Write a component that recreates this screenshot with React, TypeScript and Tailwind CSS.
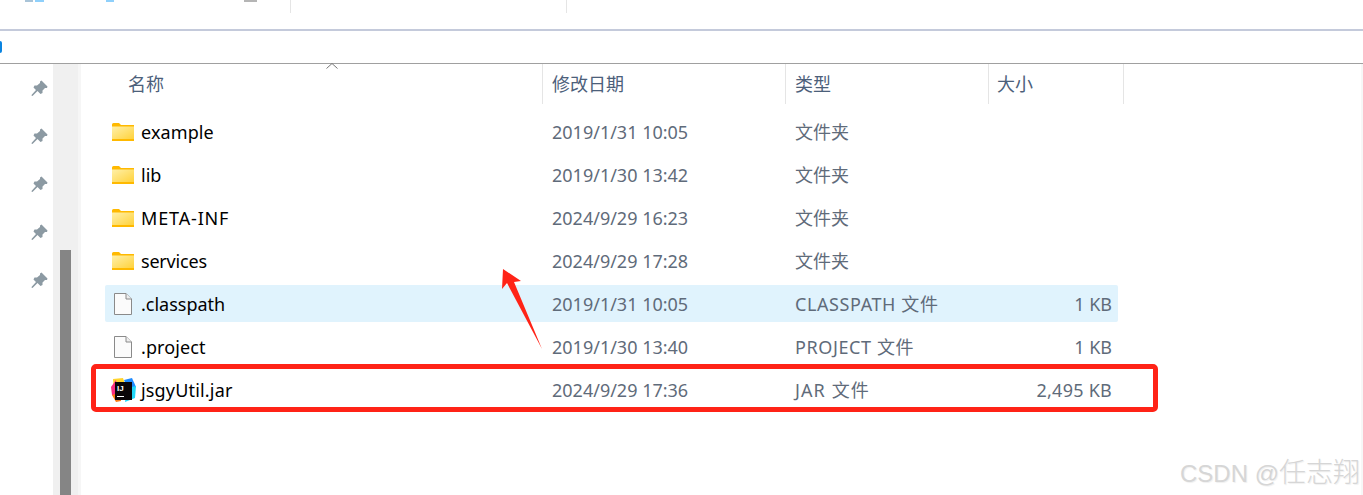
const FONT = "font-['Noto_Sans','Noto_Sans_CJK_SC',sans-serif]"

const ROWS = [
  { name: 'example', date: '2019/1/31 10:05', type: '文件夹', size: '', icon: 'folder', nameCls: 'tracking-[0.1px]', typeCls: '' },
  { name: 'lib', date: '2019/1/30 13:42', type: '文件夹', size: '', icon: 'folder', nameCls: '', typeCls: '' },
  { name: 'META-INF', date: '2024/9/29 16:23', type: '文件夹', size: '', icon: 'folder', nameCls: 'tracking-[0.85px]', typeCls: '' },
  { name: 'services', date: '2024/9/29 17:28', type: '文件夹', size: '', icon: 'folder', nameCls: 'tracking-[-0.2px]', typeCls: '' },
  { name: '.classpath', date: '2019/1/31 10:05', type: 'CLASSPATH 文件', size: '1 KB', icon: 'file', nameCls: '', typeCls: 'tracking-[0.6px]' },
  { name: '.project', date: '2019/1/30 13:40', type: 'PROJECT 文件', size: '1 KB', icon: 'file', nameCls: 'tracking-[0.1px]', typeCls: 'tracking-[0.6px]' },
  { name: 'jsgyUtil.jar', date: '2024/9/29 17:36', type: 'JAR 文件', size: '2,495 KB', icon: 'jar', nameCls: 'tracking-[0.17px]', typeCls: 'tracking-[1.1px]' },
]

function FolderIcon() {
  return (
    <svg width="22" height="18" viewBox="0 0 22 18">
      <path d="M0 1.5Q0 0 1.5 0H7L9 2H22V18H0Z" fill="#ffb900" />
      <rect x="0" y="3" width="22" height="15" fill="#ffb900" />
      <defs>
        <linearGradient id="folderFill" x1="0" y1="0" x2="1" y2="1">
          <stop offset="0" stopColor="#fff0a8" />
          <stop offset="1" stopColor="#ffd23c" />
        </linearGradient>
      </defs>
      <rect x="0" y="3.5" width="22" height="12.5" fill="url(#folderFill)" />
    </svg>
  )
}

function FileIcon() {
  return (
    <svg width="18" height="22" viewBox="0 0 18 22">
      <path d="M.5.5H12L17.5 6V21.5H.5Z" fill="#fbfbfb" stroke="#8a8a8a" />
      <path d="M12 .5V6H17.5" fill="#eeeeee" stroke="#8a8a8a" />
    </svg>
  )
}

function JarIcon() {
  return (
    <svg width="25" height="24" viewBox="0 0 25 24">
      <path d="M2 1L12 0L14 6L3 14Z" fill="#ffd42e" />
      <path d="M0 9L5 2L8 20L1 17Z" fill="#fa2f82" />
      <path d="M1 17L10 14L10 23L5 24Z" fill="#fb7a10" />
      <path d="M13 2L21 0L25 9L18 14Z" fill="#1f8bff" />
      <path d="M16 10L25 8L24 20L14 24Z" fill="#21d7f8" />
      <rect x="4" y="4" width="17" height="18" fill="#0a0608" />
      <text x="6" y="13" fontSize="8" fontWeight="700" fill="#ffffff" fontFamily="Liberation Sans, sans-serif">IJ</text>
      <rect x="6" y="18" width="7" height="1" fill="#ffffff" />
    </svg>
  )
}

function PinIcon() {
  return (
    <svg width="17" height="17" viewBox="0 0 17 17">
      <path d="M10.5 0.5L16.5 6.5L16 8L14 8L11.5 10.5L11.5 13L9.5 14L6.5 11L1.5 16L0.5 15.5L0.5 15L5 10L2.5 7.5L3.5 5.5L6 5.5L9 3L9 1.5Z" fill="#8c9aa3" />
    </svg>
  )
}

function RowIcon({ icon }: { icon: string }) {
  if (icon === 'folder') return <FolderIcon />
  if (icon === 'file') return <FileIcon />
  return <JarIcon />
}

export default function App() {
  return (
    <div className={`${FONT} relative h-[495px] w-[1363px] overflow-hidden bg-white`}>
      {/* top of the ribbon, mostly cropped away */}
      <div className="relative h-[29px]">
        <div className="absolute left-[25px] top-0 h-[2px] w-[8px] bg-[#a9c4d8]" />
        <div className="absolute left-[35px] top-0 h-[2px] w-[9px] bg-[#8fd0fb]" />
        <div className="absolute left-[106px] top-0 h-[2px] w-[8px] bg-[#8fd0fb]" />
        <div className="absolute left-[244px] top-0 h-[2px] w-[13px] bg-[#b5b5b5]" />
        <div className="absolute left-[290px] top-0 h-[13px] w-px bg-[#e5e5e5]" />
        <div className="absolute left-[566px] top-0 h-[13px] w-px bg-[#e5e5e5]" />
      </div>
      <div className="h-[2px] bg-[#c4cadb]" />
      <div className="flex h-[32px] items-center">
        <div className="h-[12px] w-[2px] rounded-r-full bg-[#0a84e0]" />
      </div>
      <div className="h-px bg-[#a0a0a0]" />

      <div className="flex h-[431px]">
        {/* quick access pins */}
        <div className="flex w-[53px] flex-col items-end gap-[31px] pr-[5px] pt-[16px]">
          <PinIcon />
          <PinIcon />
          <PinIcon />
          <PinIcon />
          <PinIcon />
        </div>
        {/* scrollbar */}
        <div className="flex w-[25px] flex-col justify-end bg-[#f0f0f0] pl-[7px]">
          <div className="h-[245px] w-[11px] bg-[#858585]" />
        </div>
        <div className="w-[3px] bg-[#f6f6f6]" />

        <div className="relative flex-1">
          <div className="absolute left-[245px] top-[-1px] h-[5px] w-[10px]">
            <svg width="12" height="6" viewBox="0 0 12 6">
              <path d="M.5 5.5L6 .5L11.5 5.5" fill="none" stroke="#777777" />
            </svg>
          </div>
          {/* column headers */}
          <div className="flex h-[40px] text-[18px] text-[#4c607a]">
            <div className="w-[462px] border-r border-[#e5e5e5] pl-[47px] pt-[7px]">名称</div>
            <div className="w-[243px] border-r border-[#e5e5e5] pl-[9px] pt-[7px]">修改日期</div>
            <div className="w-[203px] border-r border-[#e5e5e5] pl-[9px] pt-[7px]">类型</div>
            <div className="w-[135px] border-r border-[#e5e5e5] pl-[8px] pt-[7px]">大小</div>
          </div>

          <div className="ml-[24px] mt-[9px] flex w-[1013px] flex-col gap-[6px]">
            {ROWS.map((row) => (
              <div
                key={row.name}
                className={`grid h-[37px] grid-cols-[437px_243px_203px_130px] items-center rounded-[2px] text-[18px] leading-none ${
                  row.name === '.classpath' ? 'bg-[#e0f3fd]' : ''
                }`}
              >
                <div className="flex items-center text-black">
                  <div className="flex w-[36px] justify-center">
                    <RowIcon icon={row.icon} />
                  </div>
                  <span className={row.nameCls}>{row.name}</span>
                </div>
                <div className="pl-[10px] text-[#5f6b7a]">{row.date}</div>
                <div className={`pl-[10px] text-[#5f6b7a] ${row.typeCls}`}>{row.type}</div>
                <div className={`pr-[6px] text-right text-[#5f6b7a] ${row.size.length > 4 ? 'tracking-[0.25px]' : ''}`}>{row.size}</div>
              </div>
            ))}
          </div>
        </div>
      </div>

      {/* annotations drawn on top of the screenshot */}
      <div className="absolute left-[91px] top-[364px] h-[48px] w-[1067px] rounded-[5px] border-[5px] border-[#ff2317]" />
      <svg className="absolute left-[500px] top-[265px]" width="44" height="90" viewBox="0 0 44 90">
        <path d="M3 4L21 16L14 17L42 84L7 18L2 24Z" fill="#ff2317" />
      </svg>
      <div className="absolute left-[1180px] top-[456px] whitespace-nowrap font-['Liberation_Sans','Noto_Sans_CJK_SC',sans-serif] text-[24px] leading-[34px] text-[#d6d6d6] [text-shadow:1px_1px_1px_#f0f0f0]">
        CSDN @<span className="text-[27px] font-light">任志翔</span>
      </div>
      <div className="absolute right-0 top-[64px] h-[431px] w-[2px] bg-[#f7f7f7]" />
    </div>
  )
}
